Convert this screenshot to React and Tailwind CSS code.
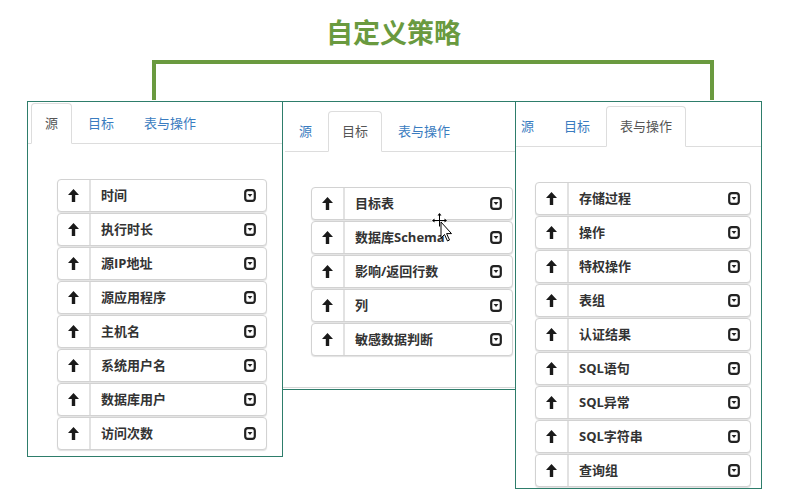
import React from "react";

const FONT = { fontFamily: '"Open Sans", "Noto Sans CJK SC", sans-serif' };

function UpArrow() {
  return (
    <svg width="11" height="13" viewBox="0 0 11 13">
      <polygon points="5.5,0 11,6 7.2,6 7.2,13 3.8,13 3.8,6 0,6" fill="#1a1a1a" />
    </svg>
  );
}

function CaretSquare() {
  return (
    <svg width="12" height="13" viewBox="0 0 12 13">
      <rect x="1.2" y="1.2" width="9.6" height="10.6" rx="2.6" fill="none" stroke="#222" strokeWidth="2.2" />
      <polygon points="3.6,5 8.4,5 6,8" fill="#222" />
    </svg>
  );
}

function Item({ label }) {
  return (
    <div className="flex h-[33px] mb-px items-stretch rounded-[4px] border border-[#d2d2d2] bg-white shadow-[0_1px_1px_rgba(0,0,0,0.12)]">
      <div className="w-[33px] shrink-0 flex items-center justify-center border-r-2 border-[#e2e2e2]">
        <UpArrow />
      </div>
      <div className="flex-1 flex items-center pl-[10px] text-[13px] font-bold text-[#333]">
        {label}
      </div>
      <div className="flex items-center mr-[10px]">
        <CaretSquare />
      </div>
    </div>
  );
}

function Tabs({ active, className }) {
  const tabs = ["源", "目标", "表与操作"];
  return (
    <div className={"flex border-b border-[#ddd] " + className}>
      {tabs.map((t) => (
        <div
          key={t}
          className={
            "h-[41px] -mb-px mr-[2px] px-[13px] flex items-center text-[13px] rounded-t-[4px] border " +
            (t === active
              ? "border-[#ddd] border-b-transparent bg-white text-[#555]"
              : "border-transparent text-[#3a7cc0]")
          }
        >
          {t}
        </div>
      ))}
    </div>
  );
}

function Panel({ active, items, width, height, tabClass, listClass, extra, bottomLine }) {
  return (
    <div
      className={"relative bg-white border border-[#2e7d6b] overflow-hidden flex flex-col shrink-0 " + width + " " + height + " " + extra}
    >
      <Tabs active={active} className={tabClass} />
      <div className={listClass}>
        {items.map((it) => (
          <Item key={it} label={it} />
        ))}
      </div>
      {bottomLine && <div className="flex-1 border-b border-[#d6d6d6] mb-px" />}
    </div>
  );
}

export default function App() {
  return (
    <div className="relative w-[800px] h-[504px] bg-white overflow-hidden" style={FONT}>
      <div className="h-[60px] pt-[17px] pl-[326px]">
        <div
          className="text-[27px] leading-[30px] font-bold text-[#6a9a3f]"
          style={{ fontFamily: '"Noto Sans CJK SC", sans-serif' }}
        >
          自定义策略
        </div>
      </div>
      <div className="ml-[152px] w-[562px] h-[40px] mb-px border-t-4 border-x-4 border-[#6a9a3f]" />
      <div className="flex items-start pl-[27px]">
        <Panel
          active="源"
          width="w-[256px]"
          height="h-[356px]"
          extra=""
          tabClass="mt-px pl-[3px]"
          listClass="mt-[35px] ml-[29px] w-[210px]"
          items={["时间", "执行时长", "源IP地址", "源应用程序", "主机名", "系统用户名", "数据库用户", "访问次数"]}
        />
        <Panel
          active="目标"
          width="w-[234px]"
          height="h-[289px]"
          extra="-ml-px z-10"
          tabClass="mt-[9px] ml-[2px]"
          listClass="mt-[35px] ml-[28px] w-[202px]"
          bottomLine
          items={["目标表", "数据库Schema", "影响/返回行数", "列", "敏感数据判断"]}
        />
        <Panel
          active="表与操作"
          width="w-[247px]"
          height="h-[388px]"
          extra="-ml-px"
          tabClass="mt-[4px] -ml-[9px]"
          listClass="mt-[35px] ml-[19px] w-[216px]"
          items={["存储过程", "操作", "特权操作", "表组", "认证结果", "SQL语句", "SQL异常", "SQL字符串", "查询组"]}
        />
      </div>
      <svg
        className="absolute left-[430px] top-[212px] z-20"
        width="24"
        height="32"
        viewBox="0 0 24 32"
      >
        <g stroke="#fff" strokeWidth="3" fill="none" strokeLinecap="square">
          <line x1="3" y1="8" x2="15" y2="8" />
          <line x1="9" y1="2" x2="9" y2="14" />
        </g>
        <g stroke="#000" strokeWidth="1" fill="none">
          <line x1="3.5" y1="8.5" x2="15.5" y2="8.5" />
          <line x1="9.5" y1="2.5" x2="9.5" y2="14.5" />
        </g>
        <polygon points="9.5,1 7.5,3.5 11.5,3.5" fill="#000" />
        <polygon points="2,8.5 4.5,6.5 4.5,10.5" fill="#000" />
        <polygon points="17,8.5 14.5,6.5 14.5,10.5" fill="#000" />
        <path
          d="M11 10 L11 26 L14.5 22.5 L17.5 29 L19.5 28 L16.6 21.6 L21.5 21.6 Z"
          fill="#fff"
          stroke="#000"
          strokeWidth="1"
          strokeLinejoin="round"
        />
      </svg>
    </div>
  );
}
